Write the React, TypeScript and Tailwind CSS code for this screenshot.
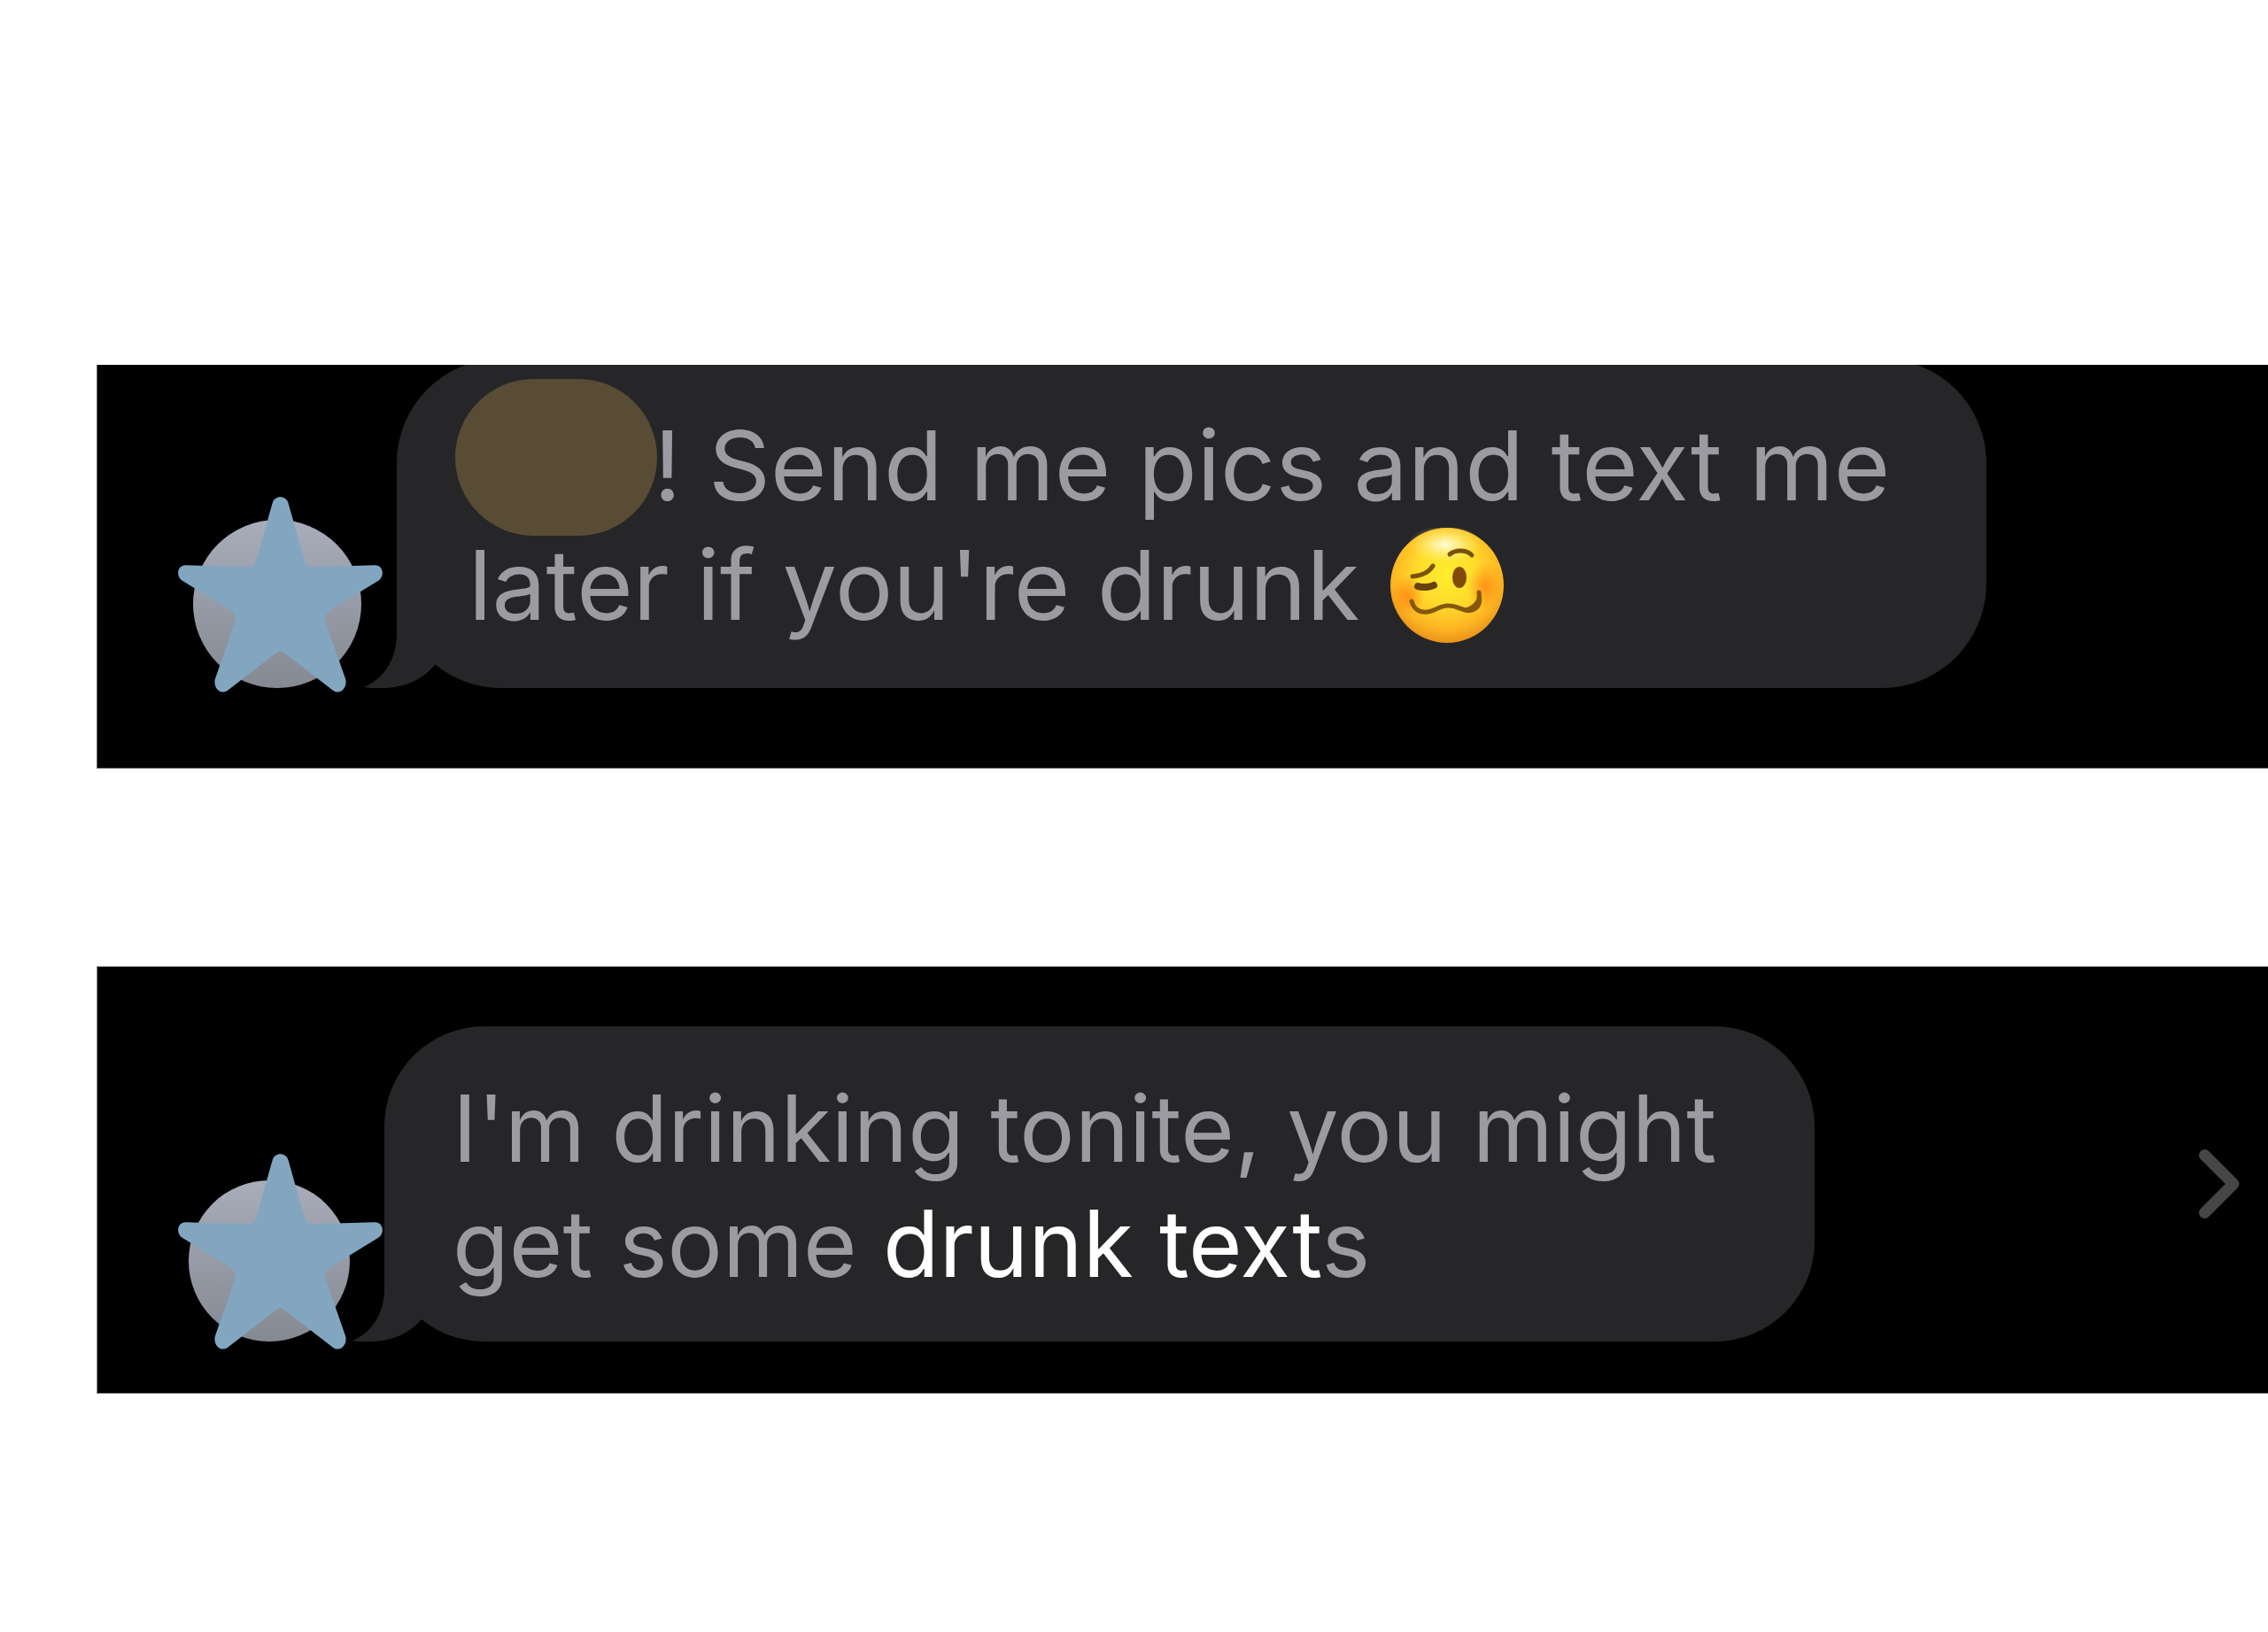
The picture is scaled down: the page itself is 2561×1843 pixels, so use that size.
import type { ReactNode } from "react";

interface MessageProps {
  avatar: ReactNode;
  children: ReactNode;
}

function Star() {
  return (
    <svg
      className="absolute h-[221px] w-[231px] max-w-none"
      viewBox="0 0 231 221"
      fill="#82a6c0"
      aria-hidden="true"
    >
      <path d="M106.700 7C109 -2 122 -2 124.500 7L142.500 71Q145 79.500 153 79.300L222 77.300C231 77 234 88 227 94.300L172 128Q164.500 133 166.500 141L189.200 206C191.500 216 183 224.500 175 218.700L121 177Q115.500 172 110 177L56 218.700C48 224.500 39.500 216 41.800 206L64.500 141Q66.500 133 59 128L4 94.300C-3 88 0 77 9 77.300L78 79.300Q86 79.500 88.500 71Z" />
    </svg>
  );
}

function Tail({ className }: { className: string }) {
  return (
    <svg
      className={`absolute bottom-0 max-w-none ${className}`}
      viewBox="0 0 80 120"
      fill="#262628"
      aria-hidden="true"
    >
      <path d="M37 0V58C37 88 22 110 0 119C8 120.500 20 120.500 30 119.500C52 117 68 108 80 94V0Z" />
    </svg>
  );
}

function WoozyFace() {
  return (
    <svg
      className="ml-[35px] h-[130px] w-[128px] shrink-0"
      viewBox="0 0 128 130"
      role="img"
      aria-label="woozy face"
      fill="none"
    >
      <defs>
        <radialGradient id="face" cx="0.5" cy="0.4" r="0.6">
          <stop offset="0" stopColor="#ffee2a" />
          <stop offset="0.45" stopColor="#ffdb2c" />
          <stop offset="0.8" stopColor="#fdb522" />
          <stop offset="1" stopColor="#e8921b" />
        </radialGradient>
        <radialGradient id="shine">
          <stop offset="0" stopColor="#fffce0" />
          <stop offset="1" stopColor="#fff36a" stopOpacity="0" />
        </radialGradient>
        <radialGradient id="cheek">
          <stop offset="0" stopColor="#ff8412" stopOpacity="0.8" />
          <stop offset="1" stopColor="#ff8412" stopOpacity="0" />
        </radialGradient>
      </defs>
      <ellipse cx="64" cy="65" rx="64" ry="65" fill="url(#face)" />
      <ellipse cx="62" cy="19" rx="42" ry="22" fill="url(#shine)" />
      <ellipse cx="19" cy="77" rx="19" ry="23" fill="url(#cheek)" />
      <ellipse cx="107" cy="66" rx="20" ry="27" fill="url(#cheek)" />
      <path d="M25 55C36 54 44 50 48 43" stroke="#7b5208" strokeWidth="5" strokeLinecap="round" />
      <path d="M67 30C74 24 87 25 92 31" stroke="#7b5208" strokeWidth="5" strokeLinecap="round" />
      <path d="M31 66C37 68 45 67 49 65" stroke="#67420a" strokeWidth="8" strokeLinecap="round" />
      <ellipse cx="78" cy="56" rx="8" ry="12" fill="#824906" />
      <path
        d="M24 83C26 91 32 96 42 95C52 94 56 87 66 88C76 88 80 94 90 93C99 91 101 83 100 73"
        stroke="#85570b"
        strokeWidth="5"
        strokeLinecap="round"
      />
      <path d="M75 90C85 93 98 88 100 72C106 81 103 92 94 95C86 98 80 94 75 90Z" fill="#85570b" />
    </svg>
  );
}

function Message({ avatar, children }: MessageProps) {
  return (
    <div className="flex items-end">
      {avatar}
      {children}
    </div>
  );
}

export default function App() {
  return (
    <main className="flex min-h-screen flex-col gap-[223px] bg-white pt-[412px] pb-[200px] pl-[109px] font-['Inter','Liberation_Sans',sans-serif] text-[#9c9ba1]">
      <section className="overflow-hidden border-b border-l border-[#6a6a6a] bg-black pb-[90px]">
        <Message
          avatar={
            <div className="relative mr-[40px] ml-[108px] size-[190px] shrink-0 rounded-full bg-linear-to-b from-[#a9adbb] to-[#858992]">
              <div className="absolute -top-[26px] -left-[17px]">
                <Star />
              </div>
            </div>
          }
        >
          <div className="relative -mt-[7px] h-[372px] w-[1795px] rounded-[118px] bg-[#262628] pt-[53px] pl-[81px] text-[109px] leading-[135px] whitespace-nowrap">
            <Tail className="-left-[37px] h-[120px] w-[80px]" />
            <p className="flex">
              <span className="relative w-[209px] shrink-0">
                <span className="absolute -top-[30px] -left-[15px] h-[177px] w-[228px] rounded-full bg-[#594c35]" />
              </span>
              <span>! Send me pics and text me</span>
            </p>
            <p className="flex items-center">
              <span>later if you're drunk</span>
              <WoozyFace />
            </p>
          </div>
        </Message>
      </section>

      <section className="flex items-center justify-between border-y border-l border-[#8a8a8a] bg-black pt-[67px] pr-[32px] pb-[58px]">
        <Message
          avatar={
            <div className="relative mr-[39px] ml-[103px] size-[182px] shrink-0 rounded-full bg-linear-to-b from-[#a9adbb] to-[#858992]">
              <div className="absolute -top-[30px] -left-[12px]">
                <Star />
              </div>
            </div>
          }
        >
          <div className="relative h-[356px] w-[1615px] rounded-[113px] bg-[#262628] pt-[50px] pl-[77px] text-[104px] leading-[130px] whitespace-nowrap">
            <Tail className="-left-[36px] h-[117px] w-[78px]" />
            <p>I'm drinking tonite, you might</p>
            <p>
              get some <mark className="bg-transparent text-white">drunk text</mark>s
            </p>
          </div>
        </Message>
        <button type="button" aria-label="Open conversation">
          <svg className="h-[78px] w-[46px]" viewBox="0 0 46 78" fill="none" aria-hidden="true">
            <path
              d="M6.500 6.500L39 39L6.500 71.500"
              stroke="#464648"
              strokeWidth="13"
              strokeLinecap="round"
              strokeLinejoin="round"
            />
          </svg>
        </button>
      </section>
    </main>
  );
}
